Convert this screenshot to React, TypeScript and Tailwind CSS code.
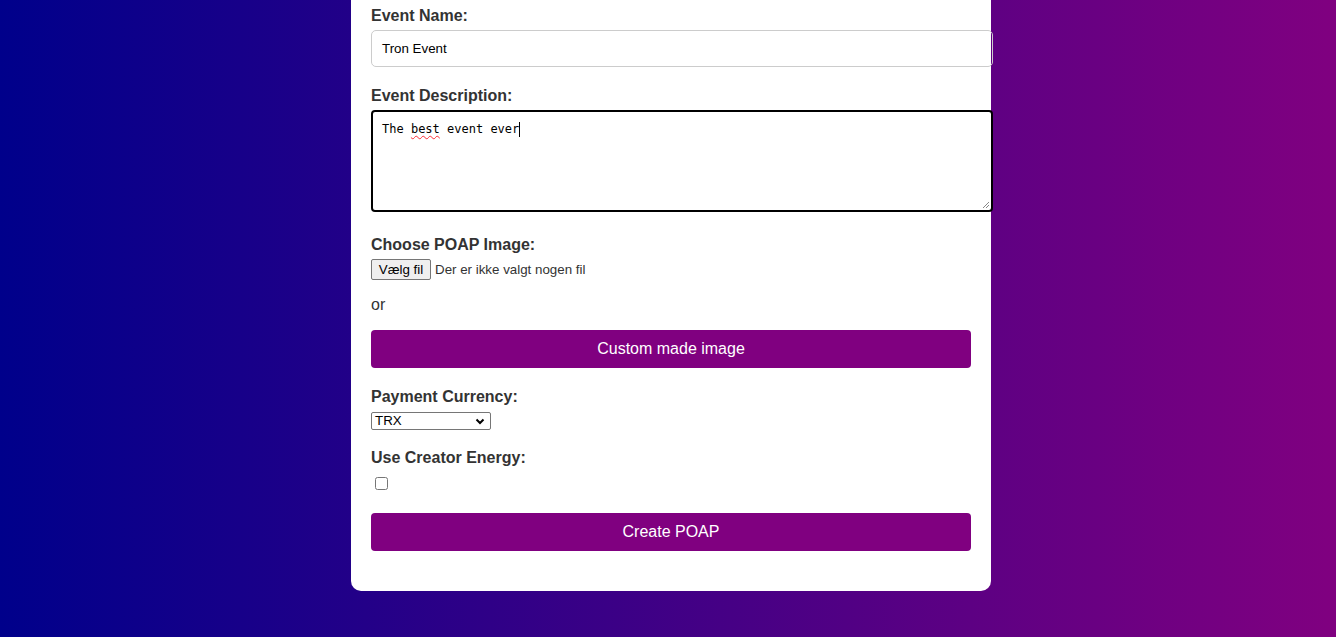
export default function App() {
  const label = "block pt-[2px] text-[16px] leading-[18px] font-bold text-[#333]";

  return (
    <div className="min-h-[637px] w-full bg-[linear-gradient(to_right,#00008b,#800080)] flex justify-center pl-[6px] font-['Liberation_Sans',Arial,sans-serif]">
      <div className="w-[640px] self-start bg-white rounded-b-[10px] px-5 pt-[5px] pb-[40px]">
        <label className={label}>Event Name:</label>
        <div className="mt-[5px] w-[622px] h-[37px] flex items-center px-[10px] border border-[#ccc] rounded-[5px] text-[13.33px] text-black">
          Tron Event
        </div>

        <label className={`${label} mt-[18px]`}>Event Description:</label>
        <div className="relative mt-[5px] w-[622px] h-[102px] border-2 border-black rounded-[4px] px-[9px] py-[10px] font-['DejaVu_Sans_Mono','Liberation_Mono',monospace] text-[12px] leading-[15px] text-black">
          <span>The </span>
          <span className="underline decoration-wavy decoration-red-500 decoration-1 underline-offset-2">best</span>
          <span> event ever</span>
          <span className="inline-block w-px h-[15px] bg-black align-top" />
          <svg className="absolute right-[1px] bottom-[1px]" width="8" height="8" viewBox="0 0 8 8">
            <path d="M7 1L1 7M7 4L4 7" stroke="#888" strokeWidth="1" />
          </svg>
        </div>

        <label className={`${label} mt-[22px]`}>Choose POAP Image:</label>
        <div className="mt-[5px] h-[21px] flex items-center text-[13.33px]">
          <span className="h-[21px] w-[60px] flex items-center justify-center bg-[#efefef] border border-[#767676] rounded-[2px] text-black">
            Vælg fil
          </span>
          <span className="ml-[4px] text-[#333]">Der er ikke valgt nogen fil</span>
        </div>

        <p className="mt-[16px] text-[16px] leading-[18px] text-[#333]">or</p>

        <button className="mt-[16px] w-full h-[38px] bg-[#800080] text-white text-[16px] rounded-[4px]">
          Custom made image
        </button>

        <label className={`${label} mt-[18px]`}>Payment Currency:</label>
        <div className="mt-[6px] w-[120px] h-[18px] flex items-center justify-between border border-[#767676] rounded-[2px] pl-[3px] pr-[5px] text-[13.33px] text-black">
          <span>TRX</span>
          <svg width="10" height="7" viewBox="0 0 10 7">
            <path d="M1.5 1.5L5 5L8.5 1.5" fill="none" stroke="black" strokeWidth="2" />
          </svg>
        </div>

        <label className={`${label} mt-[17px]`}>Use Creator Energy:</label>
        <div className="mt-[10px] h-[13px] flex">
          <input type="checkbox" className="ml-[4px] w-[13px] h-[13px]" readOnly />
        </div>

        <button className="mt-[23px] w-full h-[38px] bg-[#800080] text-white text-[16px] rounded-[4px]">
          Create POAP
        </button>
      </div>
    </div>
  );
}
